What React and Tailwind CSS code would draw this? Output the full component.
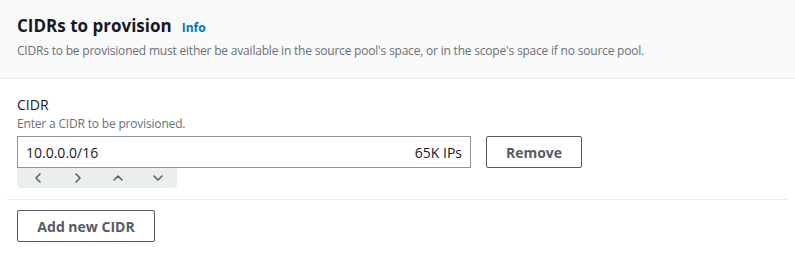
import React from "react";

const Chev = ({ d }) => (
  <svg width="14" height="14" viewBox="0 0 14 14" fill="none" stroke="#545b64" strokeWidth="1.5" strokeLinecap="round" strokeLinejoin="round">
    <path d={d} />
  </svg>
);

export default function App() {
  return (
    <div className="w-[795px] h-[258px] bg-white text-[#16191f]" style={{ fontFamily: '"Open Sans", "Noto Sans", sans-serif' }}>
      <div className="bg-[#fafafa] border-b border-[#eaeded] h-[79px] px-[17px] pt-[14px]">
        <div className="flex items-baseline gap-[10px]">
          <h2 className="text-[17px] leading-[24px] font-bold">CIDRs to provision</h2>
          <span className="text-[12px] font-bold text-[#0073bb]">Info</span>
        </div>
        <p className="text-[12px] leading-[16px] tracking-[-0.2px] text-[#687078] mt-[5px]">
          CIDRs to be provisioned must either be available in the source pool's space, or in the scope's space if no source pool.
        </p>
      </div>
      <div className="px-[7px]">
        <div className="px-[10px] pt-[17px] pb-[11px] border-b border-[#eaeded]">
          <div className="text-[14px] leading-[18px]">CIDR</div>
          <div className="text-[12px] leading-[16px] tracking-[-0.18px] text-[#687078] mt-[2px]">Enter a CIDR to be provisioned.</div>
          <div className="flex items-start gap-[15px] mt-[4px]">
            <div className="w-[454px]">
              <div className="h-[32px] border border-[#879596] flex items-center justify-between px-[8px] text-[14px]">
                <span>10.0.0.0/16</span>
                <span>65K IPs</span>
              </div>
              <div className="w-[160px] h-[20px] bg-[#eaeded] rounded-b-[4px] flex items-center pl-[14px] gap-[26px]">
                <Chev d="M9 3 5 7l4 4" />
                <Chev d="M5 3l4 4-4 4" />
                <Chev d="M3 9l4-4 4 4" />
                <Chev d="M3 5l4 4 4-4" />
              </div>
            </div>
            <button className="w-[96px] h-[32px] border border-[#545b64] rounded-[2px] text-[14px] font-bold text-[#545b64] bg-white">
              Remove
            </button>
          </div>
        </div>
      </div>
      <div className="px-[17px] pt-[10px]">
        <button className="w-[138px] h-[32px] border border-[#545b64] rounded-[2px] text-[14px] font-bold text-[#545b64] bg-white">
          Add new CIDR
        </button>
      </div>
    </div>
  );
}
